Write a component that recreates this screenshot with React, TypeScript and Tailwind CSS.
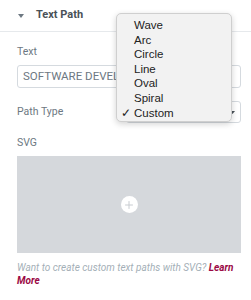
import { Plus } from "lucide-react";

const options = ["Wave", "Arc", "Circle", "Line", "Oval", "Spiral", "Custom"];

export default function App() {
  const selected = "Custom";

  return (
    <div className="relative w-[251px] h-[300px] bg-white overflow-hidden font-['Roboto',sans-serif]">
      {/* section header */}
      <div className="h-[32px] flex items-center border-b border-[#e6e9ec] pl-[18px]">
        <svg width="6" height="4" viewBox="0 0 6 4" className="mr-[12px]">
          <path d="M0 0 L6 0 L3 4 Z" fill="#6d7882" />
        </svg>
        <span className="text-[11px] font-bold text-[#495157]">Text Path</span>
      </div>

      <div className="pl-[17px] pr-[10px] pt-[12px]">
        <div className="text-[10.5px] leading-[15px] text-[#6d7882]">Text</div>
        <div className="mt-[6px] h-[23px] border border-[#d5dadf] rounded-[3px] flex items-center px-[5px] text-[11.5px] text-[#6d7882] overflow-hidden whitespace-nowrap">
          SOFTWARE DEVELOPER
        </div>

        <div className="mt-[13px] h-[22px] flex items-center justify-between">
          <span className="text-[10.5px] text-[#6d7882]">Path Type</span>
          <div className="w-[115px] h-[22px] border border-[#d5dadf] rounded-[3px] flex items-center justify-end pr-[5px]">
            <svg width="5" height="3" viewBox="0 0 5 3">
              <path d="M0 0 L5 0 L2.5 3 Z" fill="#495157" />
            </svg>
          </div>
        </div>

        <div className="mt-[12px] text-[10.5px] leading-[15px] text-[#6d7882]">SVG</div>
        <div className="mt-[6px] h-[97px] bg-[#d5d8dc] flex items-center justify-center">
          <div className="w-[17px] h-[17px] rounded-full bg-white flex items-center justify-center">
            <Plus size={12} strokeWidth={2} color="#c8ccd1" />
          </div>
        </div>

        <p className="mt-[8px] text-[10px] leading-[13px] italic text-[#a4afb7]">
          Want to create custom text paths with SVG?{" "}
          <a className="font-bold text-[#9b0a46]">Learn More</a>
        </p>
      </div>

      {/* open select menu */}
      <div className="absolute left-[116px] top-[13px] w-[116px] h-[109px] bg-[#f2f2f2] border border-[#cfcfcf] rounded-[5px] shadow-[0_2px_6px_rgba(0,0,0,0.18)] pt-[4px] font-['Liberation_Sans',sans-serif]">
        {options.map((o) => (
          <div key={o} className="relative h-[14.6px] leading-[14.6px] pl-[17px] text-[11.5px] text-[#222]">
            {o === selected && <span className="absolute left-[4px] top-0 text-[12px]">✓</span>}
            {o}
          </div>
        ))}
      </div>
    </div>
  );
}
